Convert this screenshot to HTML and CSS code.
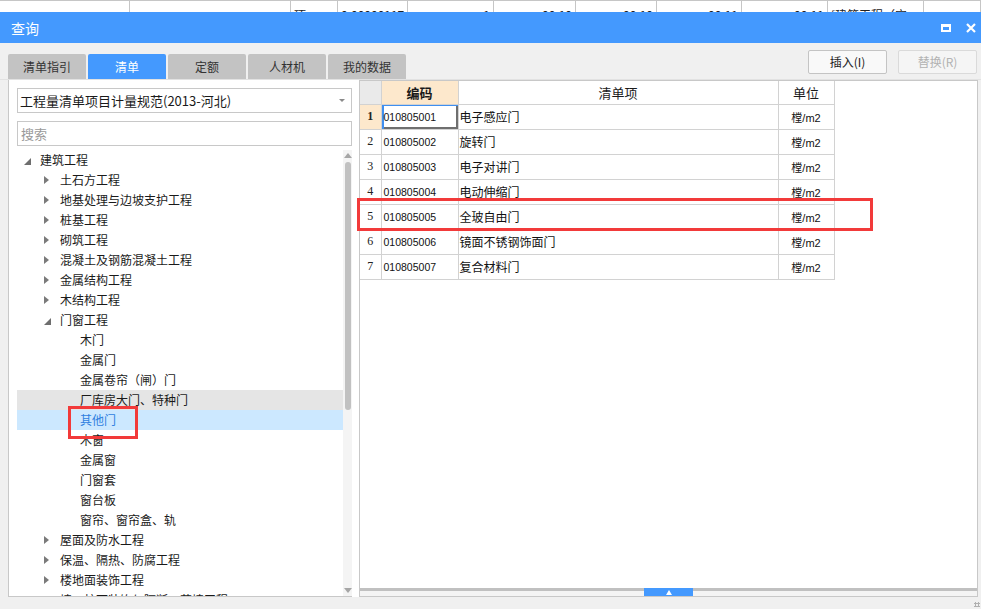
FILE: index.html
```html
<!DOCTYPE html>
<html lang="zh-CN">
<head>
<meta charset="utf-8">
<title>查询</title>
<link rel="stylesheet" href="styles.css">
</head>
<body>
<div class="sheet">
  <div class="c w130"></div>
  <div class="c w161"></div>
  <div class="c w47">项</div>
  <div class="c w70">0.00000117</div>
  <div class="c w86 r">1</div>
  <div class="c w82 r">00:10</div>
  <div class="c w81 r">00:10</div>
  <div class="c w85 r">00:11</div>
  <div class="c w86 r">00:11</div>
  <div class="c w96">[建筑工程（宝</div>
  <div class="c w57"></div>
</div>
<div class="titlebar">
  <span class="title">查询</span>
  <span class="tb-icons">
    <span class="ic-max"></span>
    <svg class="ic-close" width="10" height="10" viewBox="0 0 10 10"><path d="M1 1L9 9M9 1L1 9" stroke="#fff" stroke-width="2.2" fill="none"/></svg>
  </span>
</div>
<div class="toolbar">
  <div class="tabs">
    <div class="tab">清单指引</div>
    <div class="tab active">清单</div>
    <div class="tab">定额</div>
    <div class="tab">人材机</div>
    <div class="tab">我的数据</div>
  </div>
  <div class="btns">
    <div class="btn">插入(I)</div>
    <div class="btn disabled">替换(R)</div>
  </div>
</div>
<div class="content">
  <div class="left">
    <div class="select"><span>工程量清单项目计量规范(2013-河北)</span><span class="caret"></span></div>
    <div class="search">搜索</div>
    <div class="tree">
      <div class="list">
        <div class="row l0"><span class="arr open"><svg width="7" height="7" viewBox="0 0 7 7"><polygon points="7,0 7,7 0,7" fill="#6e6e6e"/></svg></span><span>建筑工程</span></div>
        <div class="row l1"><span class="arr closed"></span><span>土石方工程</span></div>
        <div class="row l1"><span class="arr closed"></span><span>地基处理与边坡支护工程</span></div>
        <div class="row l1"><span class="arr closed"></span><span>桩基工程</span></div>
        <div class="row l1"><span class="arr closed"></span><span>砌筑工程</span></div>
        <div class="row l1"><span class="arr closed"></span><span>混凝土及钢筋混凝土工程</span></div>
        <div class="row l1"><span class="arr closed"></span><span>金属结构工程</span></div>
        <div class="row l1"><span class="arr closed"></span><span>木结构工程</span></div>
        <div class="row l1"><span class="arr open"><svg width="7" height="7" viewBox="0 0 7 7"><polygon points="7,0 7,7 0,7" fill="#6e6e6e"/></svg></span><span>门窗工程</span></div>
        <div class="row l2"><span class="arr"></span><span>木门</span></div>
        <div class="row l2"><span class="arr"></span><span>金属门</span></div>
        <div class="row l2"><span class="arr"></span><span>金属卷帘（闸）门</span></div>
        <div class="row l2 hover"><span class="arr"></span><span>厂库房大门、特种门</span></div>
        <div class="row l2 sel"><span class="arr"></span><span>其他门</span></div>
        <div class="row l2"><span class="arr"></span><span>木窗</span></div>
        <div class="row l2"><span class="arr"></span><span>金属窗</span></div>
        <div class="row l2"><span class="arr"></span><span>门窗套</span></div>
        <div class="row l2"><span class="arr"></span><span>窗台板</span></div>
        <div class="row l2"><span class="arr"></span><span>窗帘、窗帘盒、轨</span></div>
        <div class="row l1"><span class="arr closed"></span><span>屋面及防水工程</span></div>
        <div class="row l1"><span class="arr closed"></span><span>保温、隔热、防腐工程</span></div>
        <div class="row l1"><span class="arr closed"></span><span>楼地面装饰工程</span></div>
        <div class="row l1"><span class="arr closed"></span><span>墙、柱面装饰与隔断、幕墙工程</span></div>
      </div>
      <div class="vscroll">
        <span class="up"></span>
        <span class="thumb"></span>
        <span class="down"></span>
      </div>
    </div>
  </div>
  <div class="right">
    <table class="grid">
      <colgroup><col class="cn"><col class="cc"><col class="ci"><col class="cu"></colgroup>
      <thead>
        <tr><th class="corner"></th><th class="hl">编码</th><th>清单项</th><th>单位</th></tr>
      </thead>
      <tbody>
        <tr class="cur"><td class="n">1</td><td class="code focus">010805001</td><td class="item">电子感应门</td><td class="unit">樘/m2</td></tr>
        <tr><td class="n">2</td><td class="code">010805002</td><td class="item">旋转门</td><td class="unit">樘/m2</td></tr>
        <tr><td class="n">3</td><td class="code">010805003</td><td class="item">电子对讲门</td><td class="unit">樘/m2</td></tr>
        <tr><td class="n">4</td><td class="code">010805004</td><td class="item">电动伸缩门</td><td class="unit">樘/m2</td></tr>
        <tr><td class="n">5</td><td class="code">010805005</td><td class="item">全玻自由门</td><td class="unit">樘/m2</td></tr>
        <tr><td class="n">6</td><td class="code">010805006</td><td class="item">镜面不锈钢饰面门</td><td class="unit">樘/m2</td></tr>
        <tr><td class="n">7</td><td class="code">010805007</td><td class="item">复合材料门</td><td class="unit">樘/m2</td></tr>
      </tbody>
    </table>
    <div class="fill"></div>
    <div class="hbar"><span class="handle"><span class="tri"></span></span></div>
  </div>
</div>
<div class="footer"><span class="grip"></span></div>
<div class="mark mark-tree"></div>
<div class="mark mark-row"></div>
</body>
</html>
```
FILE: styles.css
```css
* { box-sizing: border-box; }
html, body { margin: 0; padding: 0; }
body {
  width: 981px;
  height: 609px;
  overflow: hidden;
  background: #f0f0f0;
  font-family: "Noto Sans CJK SC", "Liberation Sans", sans-serif;
  color: #1f1f1f;
  position: relative;
}

/* background spreadsheet strip */
.sheet {
  height: 12px;
  background: #fff;
  border-top: 1px solid #c6c6c6;
  display: flex;
  overflow: hidden;
}
.sheet .c {
  flex: none;
  border-right: 1px solid #c6c6c6;
  font-size: 12px;
  line-height: 14px;
  padding: 7px 3px 0;
  white-space: nowrap;
  overflow: hidden;
  color: #222;
}
.sheet .c.r { text-align: right; }
.w130 { width: 130px; } .w161 { width: 161px; } .w47 { width: 47px; }
.w70 { width: 70px; } .w86 { width: 86px; } .w82 { width: 82px; }
.w81 { width: 81px; } .w85 { width: 85px; } .w96 { width: 96px; }
.w57 { width: 57px; }

/* title bar */
.titlebar {
  height: 31px;
  background: #4499fe;
  color: #fff;
  display: flex;
  align-items: center;
  padding: 0 5px 0 11px;
}
.title { font-size: 14px; line-height: 16px; }
.tb-icons { margin-left: auto; display: flex; align-items: center; gap: 15px; }
.ic-max {
  width: 10px;
  height: 8px;
  border: 2px solid #fff;
  border-top-width: 3px;
}
.ic-close { display: block; }

/* toolbar with tabs */
.toolbar {
  height: 37px;
  display: flex;
  justify-content: space-between;
  padding: 0 4px 0 8px;
  border-bottom: 1px solid #e2e2e2;
}
.tabs { display: flex; gap: 2px; align-self: flex-end; }
.tab {
  width: 78px;
  height: 25px;
  background: #c3c3c3;
  color: #333;
  font-size: 12px;
  line-height: 25px;
  text-align: center;
  border-radius: 2px 2px 0 0;
}
.tab.active { background: #4499fe; color: #fff; }
.btns { display: flex; gap: 11px; padding-top: 7px; }
.btn {
  width: 79px;
  height: 24px;
  border: 1px solid #c4c4c4;
  border-radius: 2px;
  background: #f9f9f9;
  font-size: 12px;
  line-height: 22px;
  text-align: center;
  color: #222;
}
.btn.disabled { color: #b2b2b2; border-color: #dadada; background: #f5f5f5; }

/* content */
.content {
  display: flex;
  height: 517px;
  margin: 0 3px 0 8px;
}
.left {
  width: 351px;
  flex: none;
  background: #fff;
  border-left: 1px solid #c8c8c8;
  padding: 8px 0 0 8px;
  display: flex;
  flex-direction: column;
}
.select, .search {
  width: 335px;
  height: 25px;
  border: 1px solid #c8c8c8;
  font-size: 13px;
  line-height: 23px;
  padding-left: 2px;
  flex: none;
}
.select { display: flex; justify-content: space-between; align-items: center; color: #1a1a1a; }
.caret {
  width: 0; height: 0;
  border-left: 3px solid transparent;
  border-right: 3px solid transparent;
  border-top: 3px solid #8a8a8a;
  margin-right: 6px;
}
.search { margin-top: 8px; color: #9a9a9a; padding-left: 3px; }
.tree {
  margin-top: 4px;
  flex: 1;
  display: flex;
  overflow: hidden;
  border-bottom: 1px solid #c8c8c8;
  margin-left: -8px;
  padding-left: 8px;
  width: 343px;
}
.list { width: 326px; flex: none; overflow: hidden; }
.row {
  height: 20px;
  display: flex;
  align-items: center;
  font-size: 12px;
  line-height: 20px;
  white-space: nowrap;
  color: #1a1a1a;
}
.row.l0 { padding-left: 7px; }
.row.l1 { padding-left: 27px; }
.row.l2 { padding-left: 47px; }
.row.hover { background: #e5e5e5; }
.row.sel { background: #cce8ff; color: #2f7fe0; }
.arr { width: 16px; flex: none; height: 20px; display: flex; align-items: center; }
.arr.open svg { display: block; margin-top: 2px; }
.arr.closed::before {
  content: "";
  display: block;
  width: 0; height: 0;
  border-left: 5px solid #7a7a7a;
  border-top: 4px solid transparent;
  border-bottom: 4px solid transparent;
}
.vscroll {
  width: 9px;
  flex: none;
  background: #f4f4f4;
  display: flex;
  flex-direction: column;
  align-items: center;
}
.vscroll .up {
  margin-top: 3px;
  width: 0; height: 0;
  border-left: 4px solid transparent;
  border-right: 4px solid transparent;
  border-bottom: 5px solid #a6a6a6;
}
.vscroll .thumb {
  margin-top: 4px;
  width: 6px;
  height: 248px;
  border-radius: 3px;
  background: #c1c1c1;
}
.vscroll .down {
  margin-top: auto;
  margin-bottom: 3px;
  width: 0; height: 0;
  border-left: 4px solid transparent;
  border-right: 4px solid transparent;
  border-top: 5px solid #a6a6a6;
}

/* right panel */
.right {
  width: 619px;
  flex: none;
  background: #fff;
  border: 1px solid #c8c8c8;
  display: flex;
  flex-direction: column;
}
.grid {
  border-collapse: collapse;
  table-layout: fixed;
  width: 474px;
  flex: none;
}
.cn { width: 21px; } .cc { width: 77px; } .ci { width: 320px; } .cu { width: 56px; }
.grid th, .grid td {
  border: 1px solid #d2d2d2;
  padding: 0;
  white-space: nowrap;
  overflow: hidden;
}
.grid th {
  height: 23px;
  font-size: 13px;
  font-weight: normal;
  color: #1a1a1a;
  border-top: none;
  border-left: none;
}
.grid th.corner { background: #eaeaea; }
.grid th.hl { background: #fde8cc; font-weight: bold; }
.grid td { height: 25px; }
.grid td:first-child, .grid th:first-child { border-left: none; }
.grid td.n {
  font-family: "Liberation Serif", serif;
  font-size: 12px;
  text-align: center;
  color: #222;
}
.grid tr.cur td.n { background: #fde8cc; font-weight: bold; }
.grid td.code {
  font-family: "Liberation Sans", sans-serif;
  font-size: 10.5px;
  padding-left: 2px;
  color: #111;
}
.grid td.focus { box-shadow: inset 2px 1px 0 #3f8ff0, inset -2px -2px 0 #6f6f6f; }
.grid td.item { font-size: 12px; padding-left: 1px; color: #111; }
.grid td.unit {
  font-family: "Liberation Sans", "Noto Sans CJK SC", sans-serif;
  font-size: 11px;
  text-align: center;
  color: #111;
}
.fill { flex: 1; }
.hbar {
  height: 8px;
  flex: none;
  border-top: 3px solid #c0c0c0;
  background: #f4f4f4;
  display: flex;
  justify-content: center;
}
.handle {
  width: 49px;
  height: 8px;
  margin-top: -3px;
  background: #4499fe;
  display: flex;
  justify-content: center;
  align-items: center;
}
.handle .tri {
  width: 0; height: 0;
  border-left: 3px solid transparent;
  border-right: 3px solid transparent;
  border-bottom: 5px solid #fff;
}

.footer { height: 12px; display: flex; justify-content: flex-end; padding: 5px 1px 0 0; }
.grip {
  width: 6px; height: 5px;
  background:
    radial-gradient(circle, #b0b0b0 1px, transparent 1.2px) 0 0 / 3px 3px;
}

/* annotation boxes */
.mark { position: absolute; border: 3px solid #f23a3a; }
.mark-tree { left: 68px; top: 406px; width: 70px; height: 33px; }
.mark-row { left: 357px; top: 198px; width: 516px; height: 33px; }
```
